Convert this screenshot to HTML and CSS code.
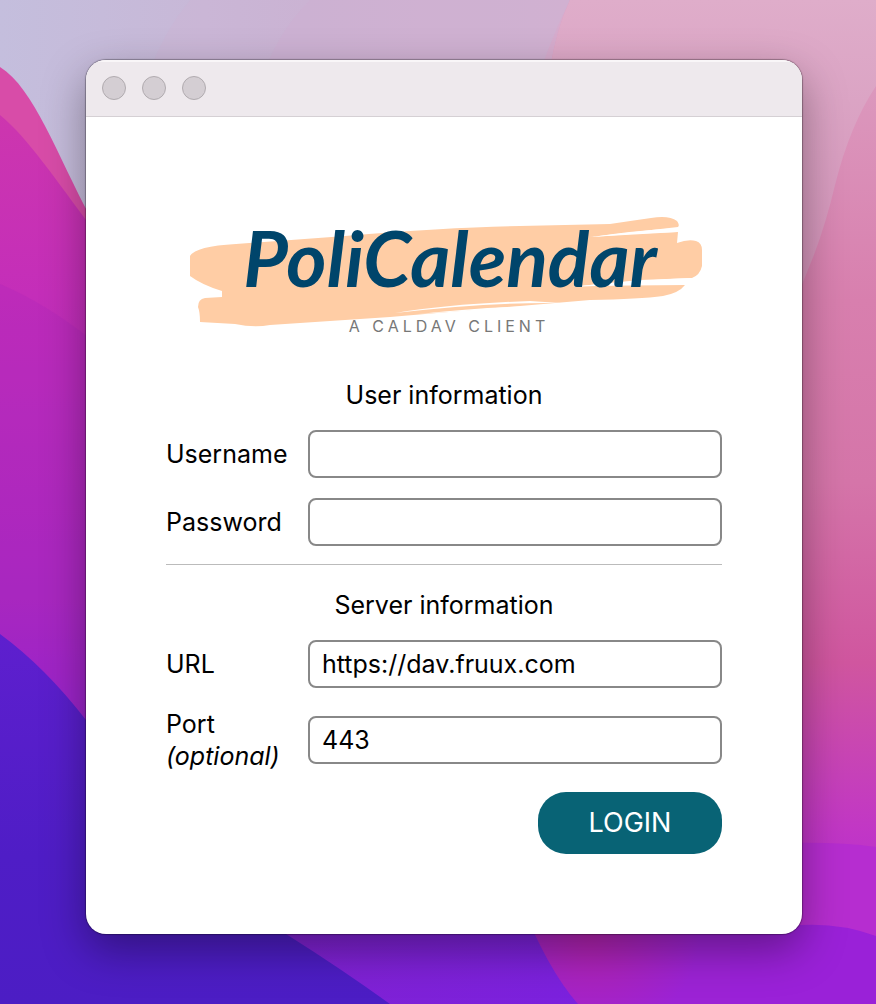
FILE: index.html
```html
<!DOCTYPE html>
<html lang="en">
<head>
<meta charset="utf-8">
<meta name="viewport" content="width=device-width, initial-scale=1">
<title>PoliCalendar</title>
<link rel="stylesheet" href="styles.css">
</head>
<body>
<svg class="wallpaper" viewBox="0 0 876 1004" preserveAspectRatio="none" aria-hidden="true">
  <defs>
    <linearGradient id="sky"><stop offset="0" stop-color="#c4bedd"/><stop offset=".35" stop-color="#cab5d4"/><stop offset=".65" stop-color="#d1b4d3"/></linearGradient>
    <linearGradient id="rose" x2="0" y2="1"><stop offset="0" stop-color="#dda2c3"/><stop offset=".3" stop-color="#d87fae"/><stop offset=".48" stop-color="#d575a9"/><stop offset=".66" stop-color="#d0569f"/><stop offset=".83" stop-color="#c136c6"/><stop offset="1" stop-color="#a424d8"/></linearGradient>
    <linearGradient id="haze" x2="0" y2="1"><stop offset="0" stop-color="#dfadca"/><stop offset="1" stop-color="#d391b8"/></linearGradient>
    <linearGradient id="magenta" gradientUnits="userSpaceOnUse" x1="0" y1="110" x2="0" y2="720"><stop offset="0" stop-color="#cd36ae"/><stop offset=".3" stop-color="#c42eb9"/><stop offset=".8" stop-color="#a828c1"/><stop offset="1" stop-color="#9423cf"/></linearGradient>
    <linearGradient id="indigo" x2="0" y2="1"><stop offset="0" stop-color="#5e1fce"/><stop offset=".6" stop-color="#4f1dc6"/><stop offset="1" stop-color="#4c1dc4"/></linearGradient>
    <linearGradient id="violet"><stop offset="0" stop-color="#8222cf"/><stop offset="1" stop-color="#7b21df"/></linearGradient>
    <radialGradient id="glow" gradientUnits="userSpaceOnUse" cx="590" cy="930" r="110"><stop offset="0" stop-color="#b423ae"/><stop offset="1" stop-color="#b423ae" stop-opacity="0"/></radialGradient>
  </defs>
  <path fill="url(#sky)" d="M0 0H876V1004H0z"/>
  <path fill="#d2add0" opacity=".2" d="M190 0Q165 30 150 70H600V0z"/>
  <path fill="#d2add0" opacity=".3" d="M310 0Q280 30 265 70H600V0z"/>
  <path fill="#dba8ca" opacity=".5" d="M570 0Q545 50 532 100H600V0z"/>
  <path fill="url(#rose)" d="M570 0Q556 30 550 70V1004H876V0z"/>
  <path fill="url(#haze)" d="M570 0Q556 30 550 70L700 310H790Q820 250 835 185Q850 125 876 86V0z"/>
  <path fill="#d84ca8" d="M0 67C34 88 57 155 92 220L300 500V1004H0z"/>
  <path fill="url(#magenta)" d="M0 115C28 138 56 180 92 228L600 1004H0z"/>
  <path fill="#a725bd" opacity=".25" d="M0 284Q45 303 92 340V780H0z"/>
  <path fill="url(#violet)" d="M180 850H610V1004H280z"/>
  <path fill="#9c23d5" d="M520 900Q548 970 578 1004H876V850H520z"/>
  <path fill="#b62dd0" d="M790 843Q840 842 876 847V960H790z"/>
  <path fill="#9a21d8" d="M730 932Q760 930 790 926Q835 921 876 936V1004H730z"/>
  <path fill="url(#glow)" d="M520 900Q548 970 578 1004H720V900z"/>
  <path fill="url(#indigo)" d="M0 634Q45 667 86 720L286 934Q340 968 390 1004H0z"/>
</svg>

<main class="window">
  <header class="titlebar">
    <button class="dot" type="button" aria-label="Close"></button>
    <button class="dot" type="button" aria-label="Minimize"></button>
    <button class="dot" type="button" aria-label="Zoom"></button>
  </header>
  <form class="login">
    <svg class="logo" viewBox="166 197 556 141" role="img" aria-label="PoliCalendar, a CalDAV client">
      <path fill="#ffcda5" d="M190 256Q196 246 236 244L345 236Q450 227 520 226L610 224Q630 221 651 218Q669 215 677 221Q680 225 678 227L590 237L678 232L677 243Q688 239 696 241Q702 243 702 250V266Q700 275 692 278L640 280L580 286L685 285Q679 293 663 296Q640 299 590 300L520 306L390 317L270 325Q254 328 235 324L200 322Q200 312 198 307Q198 299 205 298L222 297V291Q202 285 190 276z"/>
      <path fill="#fff" d="M395 313Q450 304 530 301L560 303Q490 302 395 313zM418 314Q490 306 554 306Q490 309 418 314z"/>
      <path fill="#fff" d="M592 237Q630 231 677 228V232Q635 233 592 237zM572 287Q620 281 692 278L686 284Q630 284 572 287z"/>
      <text class="logo-name" x="450" y="287" text-anchor="middle">PoliCalendar</text>
      <text class="logo-tag" x="449" y="332" text-anchor="middle">A CALDAV CLIENT</text>
    </svg>
    <h2 class="heading">User information</h2>
    <div class="fields">
      <label for="username">Username</label>
      <input class="field" id="username" type="text">
      <label for="password">Password</label>
      <input class="field" id="password" type="password">
    </div>
    <hr class="rule">
    <h2 class="heading">Server information</h2>
    <div class="fields">
      <label for="url">URL</label>
      <input class="field" id="url" type="text" value="https://dav.fruux.com">
      <label for="port">Port <em class="optional">(optional)</em></label>
      <input class="field" id="port" type="text" value="443">
    </div>
    <button class="submit" type="submit">LOGIN</button>
  </form>
</main>
</body>
</html>
```
FILE: styles.css
```css
* {
  box-sizing: border-box;
}

body {
  margin: 0;
  min-height: 100vh;
  padding: 60px 74px 70px 86px;
  font: 25px/32px Inter, "Liberation Sans", sans-serif;
  color: #000;
}

.wallpaper {
  position: absolute;
  inset: 0;
  z-index: -1;
  width: 100%;
  height: 100%;
}

.window {
  overflow: hidden;
  border-radius: 20px;
  background: #fff;
  box-shadow: 0 0 1px 1px rgba(0, 0, 0, 0.3), 0 16px 44px rgba(0, 0, 0, 0.36);
}

.titlebar {
  display: flex;
  gap: 16px;
  padding: 16px;
  border-bottom: 1px solid #d5d0d4;
  background: #eee9ed;
  box-shadow: inset 0 2px 0 #f9f6f8;
}

.dot {
  width: 24px;
  height: 24px;
  padding: 0;
  border: 1px solid #b0abaf;
  border-radius: 50%;
  background: #d4ced3;
}

.login {
  display: flex;
  flex-direction: column;
  padding: 80px;
}

.logo {
  display: block;
  width: 100%;
  margin-bottom: 41px;
}

.logo-name {
  font: italic 700 77px Lato, sans-serif;
  fill: #00456b;
}

.logo-tag {
  font: 16px Inter, sans-serif;
  letter-spacing: 4px;
  fill: #777;
}

.heading {
  margin: 0 0 19px;
  font-size: 25px;
  font-weight: 400;
  text-align: center;
}

.fields {
  display: grid;
  grid-template-columns: 122px 1fr;
  gap: 20px;
  align-items: center;
}

.field {
  width: 100%;
  height: 48px;
  padding: 0 12px;
  border: 2px solid #888;
  border-radius: 8px;
  background: #fff;
  color: #000;
  font: inherit;
}

.optional {
  display: block;
}

.rule {
  width: 100%;
  height: 1px;
  margin: 18px 0 24px;
  border: 0;
  background: #bbb;
}

.submit {
  align-self: flex-end;
  width: 184px;
  height: 62px;
  margin-top: 20px;
  border: 0;
  border-radius: 28px;
  background: #086375;
  color: #fff;
  font: inherit;
  font-size: 27px;
}
```
